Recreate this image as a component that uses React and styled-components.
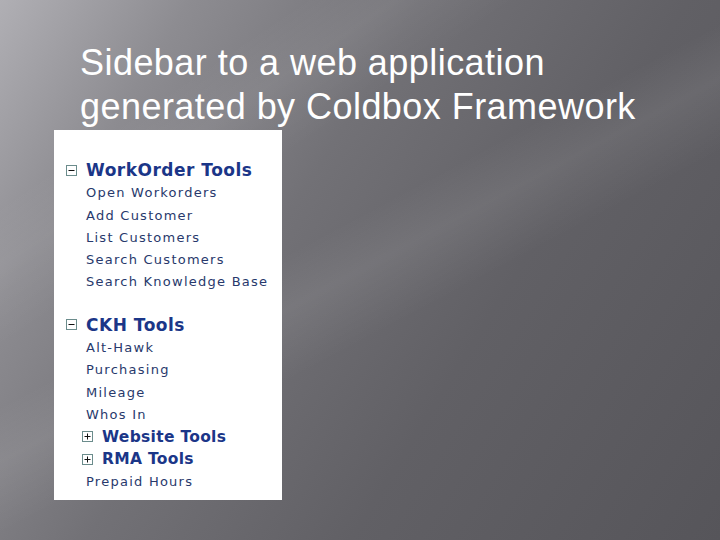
import React from "react";
import styled, { createGlobalStyle } from "styled-components";

const menu = [
  {
    title: "WorkOrder Tools",
    items: [
      "Open Workorders",
      "Add Customer",
      "List Customers",
      "Search Customers",
      "Search Knowledge Base",
    ],
  },
  {
    title: "CKH Tools",
    items: [
      "Alt-Hawk",
      "Purchasing",
      "Mileage",
      "Whos In",
      { title: "Website Tools" },
      { title: "RMA Tools" },
      "Prepaid Hours",
    ],
  },
];

const GlobalStyle = createGlobalStyle`
  html, body {
    margin: 0;
    padding: 0;
  }
  body {
    font-family: "Liberation Sans", Arial, sans-serif;
  }
`;

function ToggleBox({ open }) {
  return (
    <BoxIcon width="11" height="11" viewBox="0 0 11 11">
      <rect x="0.5" y="0.5" width="10" height="10" fill="#fff" stroke="#6b8c8c" />
      <line x1="2.5" y1="5.5" x2="8.5" y2="5.5" stroke="#111" />
      {!open && <line x1="5.5" y1="2.5" x2="5.5" y2="8.5" stroke="#111" />}
    </BoxIcon>
  );
}

export default function App() {
  return (
    <>
      <GlobalStyle />
      <Slide>
        <Title>
          Sidebar to a web application
          <br />
          generated by Coldbox Framework
        </Title>
        <Panel>
          {menu.map((group) => (
            <Group key={group.title}>
              <GroupHead>
                <ToggleBox open />
                <HeadText>{group.title}</HeadText>
              </GroupHead>
              {group.items.map((item) =>
                typeof item === "string" ? (
                  <Item key={item}>{item}</Item>
                ) : (
                  <SubHead key={item.title}>
                    <ToggleBox />
                    <HeadText $small>{item.title}</HeadText>
                  </SubHead>
                )
              )}
            </Group>
          ))}
        </Panel>
      </Slide>
    </>
  );
}

const Slide = styled.div`
  width: 720px;
  height: 540px;
  overflow: hidden;
  display: flex;
  flex-direction: column;
  background:
    linear-gradient(152deg, transparent 44%, rgba(255, 255, 255, 0.07) 50%, transparent 58%),
    linear-gradient(146deg, transparent 20%, rgba(255, 255, 255, 0.06) 26%, transparent 34%),
    linear-gradient(122deg, #b0afb4 0%, #8d8c91 18%, #727176 40%, #616065 65%, #56555a 100%);
`;

const Title = styled.h1`
  margin: 0;
  padding: 41px 0 0 80px;
  font-family: "Liberation Sans", Arial, sans-serif;
  font-weight: normal;
  font-size: 36px;
  line-height: 44px;
  color: #ffffff;
  letter-spacing: 0.45px;
`;

const Panel = styled.div`
  margin: 1px 0 0 54px;
  width: 228px;
  height: 370px;
  box-sizing: border-box;
  padding: 29px 0 0 12px;
  background: #ffffff;
  display: flex;
  flex-direction: column;
  gap: 21px;
`;

const Group = styled.div`
  display: flex;
  flex-direction: column;
`;

const GroupHead = styled.div`
  display: flex;
  align-items: center;
  gap: 9px;
  height: 22.3px;
`;

const SubHead = styled(GroupHead)`
  padding-left: 16px;
  padding-top: 1px;
  box-sizing: border-box;
`;

const BoxIcon = styled.svg`
  display: block;
  flex: none;
`;

const HeadText = styled.span`
  font-family: "DejaVu Sans", Verdana, sans-serif;
  font-weight: bold;
  font-size: ${(p) => (p.$small ? "15.5px" : "17px")};
  letter-spacing: ${(p) => (p.$small ? "0.3px" : "0.5px")};
  color: #1b3688;
  white-space: nowrap;
`;

const Item = styled.div`
  height: 22.3px;
  box-sizing: border-box;
  padding: 2px 0 0 20px;
  line-height: 20.3px;
  font-family: "DejaVu Sans", Verdana, sans-serif;
  font-size: 13px;
  letter-spacing: 1.25px;
  color: #28396c;
  white-space: nowrap;
`;
